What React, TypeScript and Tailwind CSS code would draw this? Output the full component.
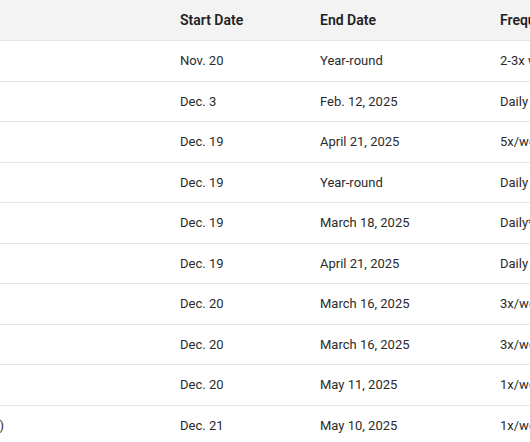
const rows = [
  { start: "Nov. 20", end: "Year-round", freq: "2-3x weekly" },
  { start: "Dec. 3", end: "Feb. 12, 2025", freq: "Daily" },
  { start: "Dec. 19", end: "April 21, 2025", freq: "5x/week" },
  { start: "Dec. 19", end: "Year-round", freq: "Daily" },
  { start: "Dec. 19", end: "March 18, 2025", freq: "Daily*" },
  { start: "Dec. 19", end: "April 21, 2025", freq: "Daily" },
  { start: "Dec. 20", end: "March 16, 2025", freq: "3x/week" },
  { start: "Dec. 20", end: "March 16, 2025", freq: "3x/week" },
  { start: "Dec. 20", end: "May 11, 2025", freq: "1x/week" },
  { start: "Dec. 21", end: "May 10, 2025", freq: "1x/week", route: "(Saturdays)" },
];

export default function App() {
  return (
    <div
      className="w-[530px] h-[442px] overflow-hidden bg-white text-[13px] text-[#2b2b2b]"
      style={{ fontFamily: "Roboto, 'Noto Sans', sans-serif" }}
    >
      <div className="grid grid-cols-[180px_140px_180px_180px] h-[41px] bg-[#f3f3f3] border-b border-[#e4e4e4] font-semibold text-[14px] text-[#222] items-center">
        <div />
        <div>Start Date</div>
        <div>End Date</div>
        <div className="whitespace-nowrap">Frequency</div>
      </div>
      {rows.map((r, i) => (
        <div
          key={i}
          className="grid grid-cols-[180px_140px_180px_180px] h-[40.5px] border-b border-[#e6e6e6] items-center"
        >
          <div className="flex justify-end pr-[176px] overflow-hidden whitespace-nowrap">
            {r.route ?? ""}
          </div>
          <div>{r.start}</div>
          <div className="whitespace-nowrap">{r.end}</div>
          <div className="whitespace-nowrap">{r.freq}</div>
        </div>
      ))}
    </div>
  );
}
